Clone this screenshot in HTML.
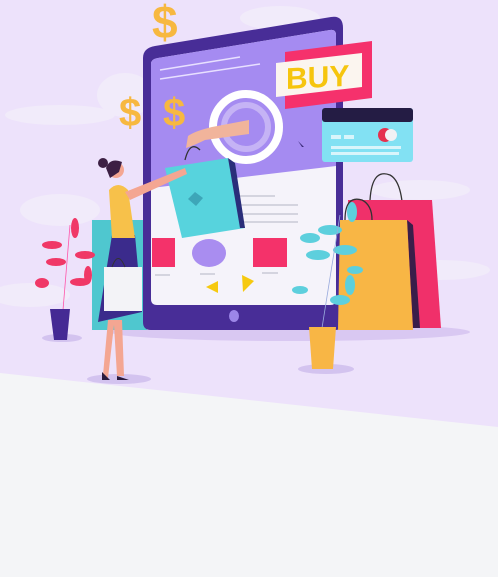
<!DOCTYPE html>
<html><head><meta charset="utf-8"><style>
html,body{margin:0;padding:0;background:#f4f5f7;}
svg{display:block}
</style></head><body>
<svg width="498" height="577" viewBox="0 0 498 577" xmlns="http://www.w3.org/2000/svg">
<rect width="498" height="577" fill="#f4f5f7"/>
<polygon points="0,0 498,0 498,427 0,373" fill="#ede2fb"/>
<!-- clouds -->
<g fill="#f1ebfa">
<ellipse cx="60" cy="115" rx="55" ry="10"/><ellipse cx="125" cy="95" rx="28" ry="22"/>
<ellipse cx="60" cy="210" rx="40" ry="16"/><ellipse cx="420" cy="190" rx="50" ry="10"/>
<ellipse cx="280" cy="18" rx="40" ry="12"/><ellipse cx="440" cy="270" rx="50" ry="10"/>
<ellipse cx="30" cy="295" rx="40" ry="12"/>
</g>
<!-- shadows -->
<ellipse cx="290" cy="332" rx="180" ry="9" fill="#d9c8f2"/>
<ellipse cx="62" cy="338" rx="20" ry="4" fill="#d3c3ef"/>
<ellipse cx="326" cy="369" rx="28" ry="5" fill="#d3c3ef"/>
<ellipse cx="119" cy="379" rx="32" ry="5" fill="#d3c3ef"/>
<!-- teal box -->
<rect x="92" y="220" width="55" height="110" fill="#4fc7cf"/>
<!-- tablet -->
<path d="M155,46 L331,17 Q343,15 343,28 L343,322 Q343,330 335,330 L151,330 Q143,330 143,322 L143,58 Q143,48 155,46Z" fill="#482d97"/>
<path d="M158,58 L330,30 Q336,29 336,35 L336,300 Q336,305 330,305 L157,305 Q151,305 151,299 L151,64 Q151,59 158,58Z" fill="#f5f3fa"/>
<path d="M158,58 L330,30 Q336,29 336,35 L336,166 L151,188 L151,64 Q151,59 158,58Z" fill="#a58bf1"/>
<line x1="160" y1="70" x2="240" y2="57" stroke="#e8e0ff" stroke-width="1.5"/>
<line x1="160" y1="79" x2="260" y2="64" stroke="#e8e0ff" stroke-width="1.5"/>
<!-- dollar signs -->
<g font-family="Liberation Sans, sans-serif" font-weight="bold" fill="#f7b840">
<text x="152" y="38" font-size="46">$</text>
<text x="119" y="126" font-size="40">$</text>
<text x="163" y="126" font-size="40">$</text>
</g>
<circle cx="246" cy="127" r="33" fill="none" stroke="#fff" stroke-width="8"/>
<circle cx="246" cy="127" r="22" fill="none" stroke="#c5b3f5" stroke-width="6"/>
<path d="M298,141 l6,6 l-2,0 Z" fill="#3a2a7a"/>
<rect x="152" y="238" width="23" height="29" fill="#f4326a"/>
<ellipse cx="209" cy="253" rx="17" ry="14" fill="#a98df0"/>
<rect x="253" y="238" width="34" height="29" fill="#f4326a"/>
<g stroke="#c9c9d6" stroke-width="1.5"><line x1="155" y1="275" x2="170" y2="275"/><line x1="200" y1="274" x2="215" y2="274"/><line x1="262" y1="273" x2="278" y2="273"/><line x1="240" y1="196" x2="275" y2="196"/><line x1="240" y1="205" x2="298" y2="205"/><line x1="240" y1="214" x2="298" y2="214"/><line x1="240" y1="222" x2="298" y2="222"/></g>
<polygon points="206,287 218,281 218,293" fill="#f6c90f"/>
<polygon points="254,281 242,275 243,292" fill="#f6c90f"/>
<ellipse cx="234" cy="316" rx="5" ry="6" fill="#9c86e8"/>
<!-- arm from screen -->
<path d="M249,120 L212,127 Q195,131 188,136 L186,148 Q195,145 205,140 L249,134Z" fill="#f1b49b"/>
<!-- teal bag -->
<path d="M185,160 Q190,140 200,150" fill="none" stroke="#333" stroke-width="1.3"/>
<polygon points="165,168 228,158 245,228 182,238" fill="#57d3dd"/>
<polygon points="228,158 235,163 245,228 240,228" fill="#2a2e7a"/>
<polygon points="195,192 203,198 196,206 188,199" fill="#3da6b8"/>
<!-- BUY -->
<polygon points="285,52 372,41 372,98 285,109" fill="#f5316c"/>
<polygon points="276,63 362,53 362,87 276,97" fill="#fbf5ef"/>
<text x="286" y="89" font-family="Liberation Sans, sans-serif" font-weight="bold" font-size="30" fill="#f6c50e" transform="skewY(-3) translate(0,15)">BUY</text>
<!-- card -->
<rect x="322" y="108" width="91" height="54" rx="3" fill="#82e1f3"/>
<rect x="322" y="108" width="91" height="14" rx="3" fill="#241c44"/>
<circle cx="385" cy="135" r="7" fill="#e5304e"/><circle cx="391" cy="135" r="6" fill="#f1f1f4"/>
<rect x="331" y="135" width="10" height="4" fill="#d8f5fb"/><rect x="344" y="135" width="10" height="4" fill="#d8f5fb"/>
<rect x="331" y="146" width="70" height="3" fill="#d8f5fb"/><rect x="331" y="152" width="68" height="3" fill="#d8f5fb"/>
<!-- bags right -->
<path d="M370,200 Q372,168 390,175 Q403,182 403,220" fill="none" stroke="#333" stroke-width="1.3"/>
<polygon points="348,200 432,200 441,328 352,328" fill="#f0306a"/>
<polygon points="407,220 413,225 420,328 413,328" fill="#3a1e4a"/>
<polygon points="340,220 407,220 413,330 338,330" fill="#f8b645"/>
<path d="M345,220 Q345,195 362,200 Q372,205 372,220" fill="none" stroke="#333" stroke-width="1.3"/>
<!-- teal plant -->
<g fill="#5dcfdd">
<ellipse cx="330" cy="230" rx="12" ry="5"/><ellipse cx="352" cy="212" rx="5" ry="10"/><ellipse cx="345" cy="250" rx="12" ry="5"/>
<ellipse cx="318" cy="255" rx="12" ry="5"/><ellipse cx="350" cy="285" rx="5" ry="10"/><ellipse cx="340" cy="300" rx="10" ry="5"/>
<ellipse cx="300" cy="290" rx="8" ry="4"/><ellipse cx="310" cy="238" rx="10" ry="5"/><ellipse cx="355" cy="270" rx="8" ry="4"/>
</g>
<line x1="322" y1="328" x2="340" y2="215" stroke="#9ad" stroke-width="0.8"/>
<polygon points="309,327 336,327 333,369 312,369" fill="#f8b645"/>
<!-- red plant -->
<g fill="#f03867">
<ellipse cx="75" cy="228" rx="4" ry="10"/><ellipse cx="52" cy="245" rx="10" ry="4"/><ellipse cx="85" cy="255" rx="10" ry="4"/>
<ellipse cx="56" cy="262" rx="10" ry="4"/><ellipse cx="88" cy="275" rx="4" ry="9"/><ellipse cx="80" cy="282" rx="10" ry="4"/><ellipse cx="42" cy="283" rx="7" ry="5"/>
</g>
<line x1="63" y1="310" x2="70" y2="225" stroke="#f5a" stroke-width="0.8"/>
<polygon points="50,309 70,309 67,340 54,340" fill="#452a94"/>
<!-- woman -->
<path d="M108,320 L103,375 L108,378 L114,325 L117,376 L124,376 L122,320Z" fill="#f4a692"/>
<path d="M102,372 l0,8 l8,0 Z M117,376 l12,4 l-12,0Z" fill="#2b1b3e"/>
<path d="M112,235 L135,235 L142,312 L98,322Z" fill="#3b2b8c"/>
<path d="M109,190 Q118,180 128,190 L135,238 L112,238Z" fill="#f7c14a"/>
<path d="M125,192 L185,168 L187,174 L130,200Z" fill="#f4a692"/>
<circle cx="116" cy="170" r="8" fill="#f4a692"/>
<path d="M106,168 Q110,157 122,162 L119,172 L110,178Z" fill="#3c1f43"/>
<circle cx="103" cy="163" r="5" fill="#3c1f43"/>
<rect x="104" y="267" width="38" height="44" fill="#f3f3f7"/>
<path d="M112,267 Q118,250 125,267" fill="none" stroke="#333" stroke-width="1"/>
</svg>
</body></html>
